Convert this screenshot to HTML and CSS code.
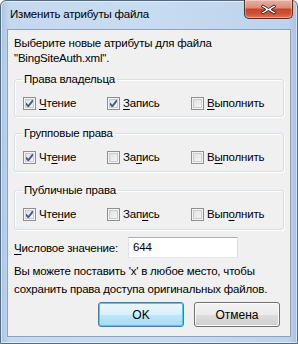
FILE: index.html
```html
<!DOCTYPE html>
<html lang="ru">
<head>
  <meta charset="UTF-8" />
  <title>Изменить атрибуты файла</title>
  <link rel="stylesheet" href="styles.css">
</head>
<body>
  <div class="window">
    <div class="titlebar">
      <span class="title">Изменить атрибуты файла</span>
      <div class="close">
        <svg width="17" height="11" viewBox="0 0 17 11">
          <path d="M3 1 L8.5 4.5 L14 1 L16 2.5 L11 5.5 L16 8.5 L14 10 L8.5 6.5 L3 10 L1 8.5 L6 5.5 L1 2.5 Z" fill="#fff" stroke="#3b2a2a" stroke-width="1" stroke-linejoin="round"/>
        </svg>
      </div>
    </div>

    <div class="client">
      <p class="intro">Выберите новые атрибуты для файла<br>"BingSiteAuth.xml".</p>

      <fieldset class="group">
        <legend>Права владельца</legend>
        <div class="row">
          <label class="check"><span class="box on"></span><span><u>Ч</u>тение</span></label>
          <label class="check"><span class="box on"></span><span><u>З</u>апись</span></label>
          <label class="check"><span class="box"></span><span><u>В</u>ыполнить</span></label>
        </div>
      </fieldset>

      <fieldset class="group">
        <legend>Групповые права</legend>
        <div class="row">
          <label class="check"><span class="box on"></span><span>Чт<u>е</u>ние</span></label>
          <label class="check"><span class="box"></span><span>За<u>п</u>ись</span></label>
          <label class="check"><span class="box"></span><span>В<u>ы</u>полнить</span></label>
        </div>
      </fieldset>

      <fieldset class="group last">
        <legend>Публичные права</legend>
        <div class="row">
          <label class="check"><span class="box on"></span><span>Чте<u>н</u>ие</span></label>
          <label class="check"><span class="box"></span><span>Зап<u>и</u>сь</span></label>
          <label class="check"><span class="box"></span><span>Вып<u>о</u>лнить</span></label>
        </div>
      </fieldset>

      <div class="numeric">
        <label><u>Ч</u>исловое значение:</label>
        <div class="field">644</div>
      </div>

      <p class="hint">Вы можете поставить 'x' в любое место, чтобы<br>сохранить права доступа оригинальных файлов.</p>

      <div class="buttons">
        <button class="btn default">OK</button>
        <button class="btn">Отмена</button>
      </div>
    </div>
  </div>
</body>
</html>
```

FILE: styles.css
```css
body {
  margin: 0;
  font-family: "Liberation Sans", Arial, sans-serif;
  font-size: 11.5px;
  letter-spacing: -0.2px;
  color: #000;
  background: #fff;
}
.window {
  width: 298px;
  height: 344px;
  box-sizing: border-box;
  border: 1px solid #4f6b86;
  border-radius: 6px 6px 0 0;
  background: linear-gradient(to right, #a9c3de, #c4d9ef 3%, #c8dcf1 50%, #bcd3ec 97%, #a9c3de);
  box-shadow: inset 0 0 0 1px rgba(255,255,255,0.55);
  padding: 0 6px 6px 6px;
  display: flex;
  flex-direction: column;
}
.titlebar {
  height: 28px;
  display: flex;
  align-items: flex-start;
  justify-content: space-between;
}
.title {
  margin-top: 7px;
  margin-left: 3px;
  color: #000;
}
.close {
  width: 49px;
  height: 19px;
  margin-top: -1px;
  margin-right: -2px;
  box-sizing: border-box;
  border: 1px solid #5b2a22;
  border-top: none;
  border-radius: 0 0 5px 5px;
  background: linear-gradient(to bottom, #e9b1a4, #d98a76 45%, #c7422a 50%, #cf5438 80%, #e07e5c);
  box-shadow: inset 0 0 0 1px rgba(255,255,255,0.35);
  display: flex;
  align-items: center;
  justify-content: center;
}
.client {
  flex: 1;
  background: #f0f0f0;
  border: 1px solid #8ea3ba;
  padding: 6px 6px 0 6px;
  display: flex;
  flex-direction: column;
}
.intro {
  margin: 0;
  line-height: 15px;
}
.group {
  margin: 6px 0 0 0;
  padding: 0 0 5px 8px;
  border: 1px solid #d5dfe5;
  border-radius: 3px;
  box-shadow: inset 1px 1px 0 #fff, 1px 1px 0 #fff;
  height: 45px;
  box-sizing: border-box;
}
.group + .group {
  margin-top: 9px;
  height: 46px;
}
.group.last {
  margin-top: 11px;
  height: 47px;
}
.group legend {
  padding: 0 2px;
  margin-left: -1px;
  line-height: 15px;
}
.row {
  display: grid;
  grid-template-columns: 84px 84px 84px;
  margin-top: 9px;
}
.check {
  display: flex;
  align-items: center;
  gap: 3px;
  line-height: 15px;
}
.check u, .numeric u {
  text-decoration-thickness: 1px;
  text-underline-offset: 2px;
}
.box {
  width: 13px;
  height: 13px;
  box-sizing: border-box;
  border: 1px solid #8e8f8f;
  background: linear-gradient(135deg, #dcdcdc, #fbfbfb);
  box-shadow: inset 0 0 0 1px #f4f4f4, inset 0 0 0 2px #c9cdd2;
  flex: none;
}
.box.on {
  background-color: #f2f2f2;
  background-image: url("data:image/svg+xml,%3Csvg xmlns='http://www.w3.org/2000/svg' width='11' height='11'%3E%3Cpath d='M1.8 5.3 L4.3 8.3 L9.3 1.8' fill='none' stroke='%23405a94' stroke-width='1.9'/%3E%3C/svg%3E"), linear-gradient(135deg, #dcdcdc, #fbfbfb);
  background-repeat: no-repeat;
  background-position: center;
}
.numeric {
  display: flex;
  align-items: center;
  margin-top: 7px;
}
.numeric label {
  width: 114px;
}
.field {
  width: 110px;
  height: 21px;
  box-sizing: border-box;
  border: 1px solid #abadb3;
  border-color: #abadb3 #dbdfe6 #e3e9ef #e2e3ea;
  background: #fff;
  padding: 2px 0 0 4px;
  line-height: 15px;
}
.hint {
  margin: 4px 0 0 0;
  line-height: 18px;
  white-space: nowrap;
}
.buttons {
  display: flex;
  justify-content: flex-end;
  gap: 10px;
  margin-top: 4px;
  padding-right: 4px;
}
.btn {
  width: 86px;
  height: 25px;
  font-family: inherit;
  font-size: 12px;
  color: #000;
  border: 1px solid #707070;
  border-radius: 3px;
  background: linear-gradient(to bottom, #f2f2f2, #ebebeb 50%, #dddddd 51%, #cfcfcf);
  box-shadow: inset 0 0 0 1px #fcfcfc;
  padding: 0;
}
.btn.default {
  border-color: #3c7fb1;
  background: linear-gradient(to bottom, #eaf6fd, #d9f0fc 50%, #bee6fd 51%, #a7d9f5);
  box-shadow: inset 0 0 0 1px #48cbf6;
}
```
